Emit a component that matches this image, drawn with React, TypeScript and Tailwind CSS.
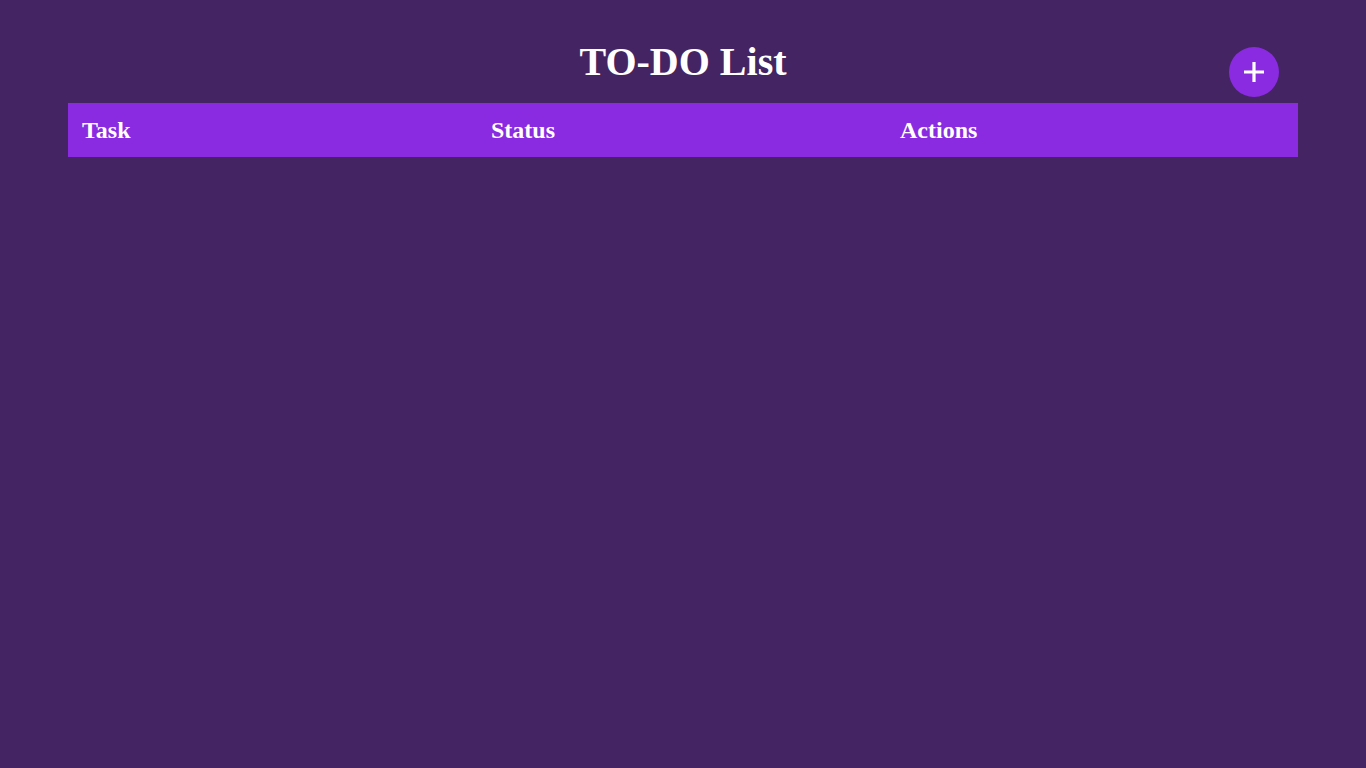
import React from "react";

export default function App() {
  return (
    <div
      className="min-h-screen w-full bg-[#442462] relative"
      style={{ fontFamily: '"Liberation Serif", "Times New Roman", serif' }}
    >
      <div className="w-[1230px] mx-auto pt-[40px]">
        <h1 className="text-center text-white font-bold text-[40px] leading-[44px] m-0">TO-DO List</h1>
        <div className="mt-[19px] grid grid-cols-3 h-[54px] bg-[#8a2be2] items-center text-white font-bold text-[24px]">
          <div className="pl-[14px]">Task</div>
          <div className="pl-[13px]">Status</div>
          <div className="pl-[12px]">Actions</div>
        </div>
      </div>
      <button
        className="absolute top-[47px] left-[1229px] w-[50px] h-[50px] rounded-full bg-[#8a2be2] flex items-center justify-center"
        aria-label="Add"
      >
        <svg width="22" height="22" viewBox="0 0 22 22">
          <path d="M11 1v20M1 11h20" stroke="white" strokeWidth="3.2" />
        </svg>
      </button>
    </div>
  );
}
